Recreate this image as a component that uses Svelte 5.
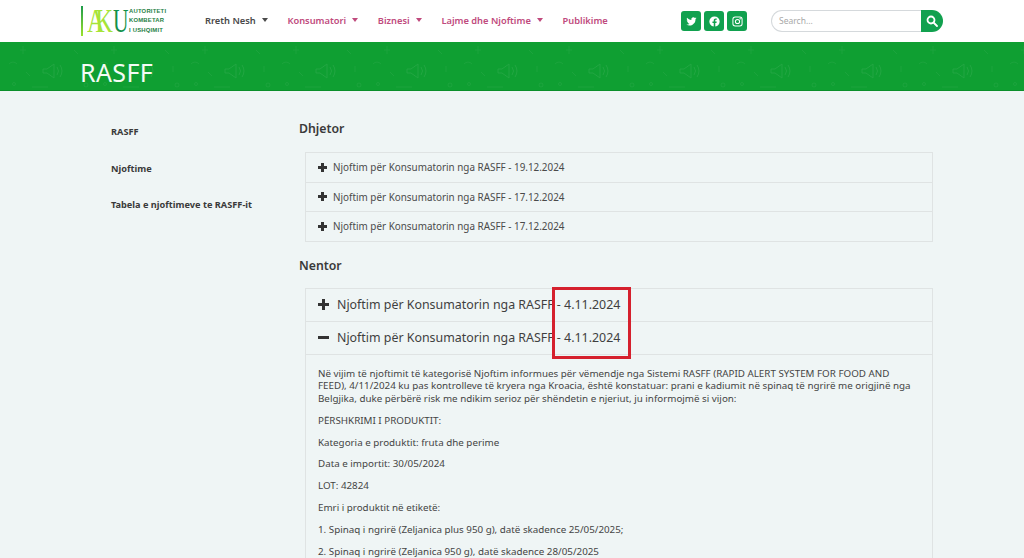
<script>
    const menu = [
        { label: 'Rreth Nesh', caret: true, dark: true },
        { label: 'Konsumatori', caret: true },
        { label: 'Biznesi', caret: true },
        { label: 'Lajme dhe Njoftime', caret: true },
        { label: 'Publikime', caret: false }
    ];
    const side = ['RASFF', 'Njoftime', 'Tabela e njoftimeve te RASFF-it'];
    const dhjetor = [
        'Njoftim për Konsumatorin nga RASFF - 19.12.2024',
        'Njoftim për Konsumatorin nga RASFF - 17.12.2024',
        'Njoftim për Konsumatorin nga RASFF - 17.12.2024'
    ];
    const paragraphs = [
        'PËRSHKRIMI I PRODUKTIT:',
        'Kategoria e produktit: fruta dhe perime',
        'Data e importit: 30/05/2024',
        'LOT: 42824',
        'Emri i produktit në etiketë:',
        '1. Spinaq i ngrirë (Zeljanica plus 950 g), datë skadence 25/05/2025;',
        '2. Spinaq i ngrirë (Zeljanica 950 g), datë skadence 28/05/2025'
    ];
    const speakers = [0, 1, 2, 3, 4, 5, 6, 7, 8, 9, 10, 11, 12];
</script>

<div class="page">
    <header class="topbar">
        <div class="logo">
            <span class="logo-bar"></span>
            <span class="logo-ak">AK</span><span class="logo-u">U</span>
            <span class="logo-text">AUTORITETI<br />KOMBETAR<br />I USHQIMIT</span>
        </div>
        <nav class="menu">
            {#each menu as item}
                <span class="menu-item" class:dark={item.dark}>
                    {item.label}
                    {#if item.caret}<i class="caret"></i>{/if}
                </span>
            {/each}
        </nav>
        <div class="social">
            <span class="social-btn">
                <svg viewBox="0 0 24 24" width="11" height="11"><path fill="#fff" d="M23 5.100c-.8.4-1.700.6-2.600.7.9-.6 1.600-1.400 2-2.500-.9.5-1.800.9-2.900 1.100a4.500 4.500 0 0 0-7.800 4.100C7.900 8.300 4.500 6.500 2.300 3.700c-1.200 2.100-.6 4.700 1.400 6-.7 0-1.400-.2-2-.6 0 2.200 1.500 4.100 3.600 4.500-.7.2-1.400.2-2 .1.600 1.800 2.300 3.100 4.300 3.100A9.100 9.100 0 0 1 .9 18.700 12.900 12.900 0 0 0 20.700 7.300c.9-.6 1.700-1.400 2.300-2.200z" /></svg>
            </span>
            <span class="social-btn">
                <svg viewBox="0 0 24 24" width="11" height="11"><path fill="#fff" d="M12 1a11 11 0 0 0-1.700 21.900v-7.700H7.500V12h2.800V9.600c0-2.800 1.600-4.300 4.100-4.300 1.200 0 2.500.2 2.500.2v2.700h-1.400c-1.400 0-1.800.9-1.800 1.700V12h3.100l-.5 3.200h-2.600v7.700A11 11 0 0 0 12 1z" /></svg>
            </span>
            <span class="social-btn">
                <svg viewBox="0 0 24 24" width="11" height="11" fill="none" stroke="#fff" stroke-width="2.200"><rect x="2" y="2" width="20" height="20" rx="5" /><circle cx="12" cy="12" r="4.600" /><circle cx="17.800" cy="6.200" r="0.600" fill="#fff" /></svg>
            </span>
        </div>
        <div class="search">
            <span class="search-input">Search...</span>
            <span class="search-btn">
                <svg viewBox="0 0 24 24" width="12" height="12" fill="none" stroke="#fff" stroke-width="3.600" stroke-linecap="round"><circle cx="10" cy="10" r="7" /><path d="M15.500 15.500 22 22" /></svg>
            </span>
        </div>
    </header>

    <section class="banner">
        <div class="banner-pattern">
            {#each speakers as s}
                <svg viewBox="0 0 91 49" width="91" height="49" fill="none" stroke="#32ad50" stroke-width="1">
                    <path d="M41 27h4l7-5v14l-7-5h-4z" />
                    <path d="M55 25q3 4 0 8M58 23q4 6 0 12" />
                    <path d="M21 4v8M18 8h6M72 8l4 4M30 45h16M7 22q4-4 8 0M80 24v6M24 30l4 4" opacity="0.700" />
                    <circle cx="84" cy="43" r="2" opacity="0.700" />
                    <circle cx="12" cy="42" r="1.500" opacity="0.700" />
                </svg>
            {/each}
        </div>
        <h1>RASFF</h1>
    </section>

    <div class="content">
        <aside class="sidebar">
            {#each side as link}
                <div class="side-link">{link}</div>
            {/each}
        </aside>
        <main class="main">
            <h2>Dhjetor</h2>
            <div class="accordion">
                {#each dhjetor as row}
                    <div class="row">
                        <span class="plus"></span>
                        <span>{row}</span>
                    </div>
                {/each}
            </div>

            <h2 class="second">Nentor</h2>
            <div class="accordion large">
                <div class="row">
                    <span class="plus"></span>
                    <span>Njoftim për Konsumatorin nga RASFF - 4.11.2024</span>
                </div>
                <div class="row">
                    <span class="plus minus"></span>
                    <span>Njoftim për Konsumatorin nga RASFF - 4.11.2024</span>
                </div>
                <div class="panel">
                    <p>Në vijim të njoftimit të kategorisë Njoftim informues për vëmendje nga Sistemi RASFF (RAPID ALERT SYSTEM FOR FOOD AND FEED), 4/11/2024 ku pas kontrolleve të kryera nga Kroacia, është konstatuar: prani e kadiumit në spinaq të ngrirë me origjinë nga Belgjika, duke përbërë risk me ndikim serioz për shëndetin e njeriut, ju informojmë si vijon:</p>
                    {#each paragraphs as p}
                        <p>{p}</p>
                    {/each}
                </div>
            </div>
        </main>
    </div>
    <div class="highlight"></div>
</div>

<style>
    :global(body) {
        margin: 0;
        background: #eff5f5;
    }

    .page {
        position: relative;
        height: 558px;
        overflow: hidden;
        font-family: "Noto Sans", "Open Sans", sans-serif;
        color: #3d3d3d;
    }

    .topbar {
        height: 42px;
        background: #fff;
        display: flex;
        align-items: center;
        padding-left: 81px;
    }

    .logo {
        display: flex;
        align-items: center;
        width: 124px;
        height: 32px;
        flex-shrink: 0;
    }
    .logo-bar {
        width: 2px;
        height: 30px;
        margin-right: 4px;
        background: linear-gradient(#1c9a4a, #9be22d);
    }
    .logo-ak {
        display: block;
        width: 26px;
        font: 34px/30px "Liberation Serif", serif;
        letter-spacing: -13px;
        color: #a6e437;
        white-space: nowrap;
        transform: scaleX(0.720);
        transform-origin: left center;
    }
    .logo-u {
        display: block;
        width: 15px;
        font: 33px/30px "Liberation Serif", serif;
        color: #12924a;
        transform: scaleX(0.650);
        transform-origin: left center;
    }
    .logo-text {
        font: bold 5.900px/9.500px "Liberation Sans", sans-serif;
        color: #1f7f45;
        margin-left: 1px;
        letter-spacing: 0.200px;
        white-space: nowrap;
    }

    .menu {
        display: flex;
        gap: 19.700px;
        width: 476px;
        flex-shrink: 0;
        margin-top: -2px;
    }
    .menu-item {
        display: flex;
        align-items: center;
        gap: 6px;
        font-size: 9.300px;
        font-weight: 600;
        color: #c04a7d;
        white-space: nowrap;
    }
    .menu-item.dark {
        color: #4a4a4a;
    }
    .caret {
        width: 0;
        height: 0;
        border: 3.500px solid transparent;
        border-top: 4px solid currentColor;
        border-bottom: 0;
    }

    .social {
        display: flex;
        gap: 3px;
        width: 90px;
        flex-shrink: 0;
    }
    .social-btn {
        width: 20px;
        height: 20px;
        background: #11a14f;
        border-radius: 3px;
        display: flex;
        align-items: center;
        justify-content: center;
    }

    .search {
        display: flex;
        width: 172px;
        height: 22px;
    }
    .search-input {
        flex: 1;
        border: 1px solid #d5d9dc;
        border-right: 0;
        border-radius: 11px 0 0 11px;
        font-size: 8.500px;
        line-height: 20px;
        padding-left: 7px;
        color: #a8a8a8;
    }
    .search-btn {
        width: 22px;
        background: #11a14f;
        border-radius: 0 11px 11px 0;
        display: flex;
        align-items: center;
        justify-content: center;
    }

    .banner {
        position: relative;
        height: 49px;
        background: #0f9f32;
        border-bottom: 1px solid #0b8f2b;
        box-sizing: border-box;
        overflow: hidden;
    }
    .banner-pattern {
        position: absolute;
        inset: 0 auto 0 -89px;
        display: flex;
        opacity: 0.550;
    }
    .banner-pattern svg {
        flex-shrink: 0;
    }
    h1 {
        position: relative;
        margin: 0;
        padding-left: 80px;
        font-size: 25px;
        font-weight: 400;
        letter-spacing: 0.400px;
        line-height: 60px;
        color: #f4fbf5;
    }

    .content {
        display: flex;
        padding-left: 111px;
    }
    .sidebar {
        width: 188px;
        flex-shrink: 0;
        padding-top: 34px;
    }
    .side-link {
        font-size: 9.200px;
        font-weight: 700;
        line-height: 13px;
        margin-bottom: 23.500px;
        color: #3a3a3a;
        white-space: nowrap;
    }

    .main {
        width: 634px;
    }
    h2 {
        margin: 30px 0 16px;
        font-size: 12.300px;
        font-weight: 600;
        line-height: 15px;
        color: #3a3a3a;
    }
    h2.second {
        margin: 16px 0 15px;
    }

    .accordion {
        margin-left: 6px;
        border: 1px solid #dfe3e3;
        font-size: 9.900px;
        color: #4a4a4a;
    }
    .row {
        display: flex;
        align-items: center;
        gap: 6px;
        height: 28.600px;
        padding-left: 12px;
        border-bottom: 1px solid #dfe3e3;
    }
    .row:last-child {
        border-bottom: 0;
    }
    .plus {
        position: relative;
        width: 9px;
        height: 9px;
        flex-shrink: 0;
    }
    .plus::before,
    .plus::after {
        content: "";
        position: absolute;
        background: #333;
    }
    .plus::before {
        left: 0;
        right: 0;
        top: 3px;
        height: 3px;
    }
    .plus::after {
        top: 0;
        bottom: 0;
        left: 3px;
        width: 3px;
    }
    .plus.minus::after {
        display: none;
    }

    .large {
        font-size: 12.400px;
        color: #3f3f3f;
    }
    .large .row {
        height: 32px;
        gap: 8px;
    }
    .large .row:nth-child(2) {
        border-bottom: 1px solid #dfe3e3;
    }
    .large .plus {
        width: 11px;
        height: 11px;
    }
    .large .plus::before {
        top: 4px;
    }
    .large .plus::after {
        left: 4px;
    }
    .panel {
        padding: 13px 12px 0;
        font-size: 9.800px;
        line-height: 12.500px;
        color: #444;
    }
    .panel p {
        margin: 0 0 9.400px;
    }

    .highlight {
        position: absolute;
        left: 552px;
        top: 287px;
        width: 73px;
        height: 66px;
        border: 3px solid #d5202d;
    }
</style>
